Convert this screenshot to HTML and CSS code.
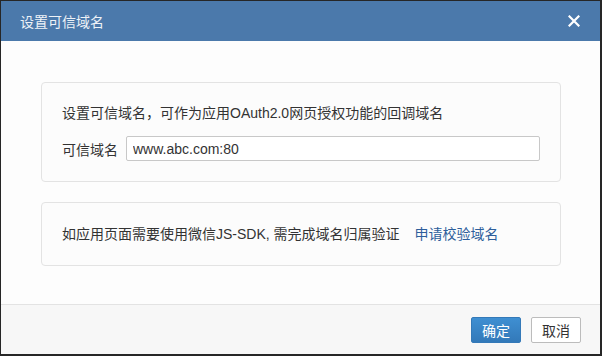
FILE: index.html
```html
<!DOCTYPE html>
<html lang="zh-CN">

<head>
    <meta charset="UTF-8" />
    <title>设置可信域名</title>
    <link rel="stylesheet" href="styles.css">
</head>

<body>
    <div class="dialog">
        <div class="dialog-header">
            <h3 class="dialog-title">设置可信域名</h3>
            <button class="dialog-close" type="button" aria-label="关闭">
                <svg width="12" height="12" viewBox="0 0 12 12">
                    <path d="M1.5 1.5 L10.5 10.5 M10.5 1.5 L1.5 10.5" stroke="#ffffff" stroke-width="2.2" stroke-linecap="square" />
                </svg>
            </button>
        </div>

        <div class="dialog-body">
            <div class="panel">
                <p class="panel-text">设置可信域名，可作为应用OAuth2.0网页授权功能的回调域名</p>
                <div class="field">
                    <label class="field-label" for="domain">可信域名</label>
                    <input class="field-input" type="text" id="domain" value="www.abc.com:80" />
                </div>
            </div>

            <div class="panel panel-tip">
                <p class="panel-text">如应用页面需要使用微信JS-SDK, 需完成域名归属验证<a class="link" href="#">申请校验域名</a></p>
            </div>
        </div>

        <div class="dialog-footer">
            <button class="btn btn-primary" type="button">确定</button>
            <button class="btn" type="button">取消</button>
        </div>
    </div>
</body>

</html>
```

FILE: styles.css
```css
* {
    box-sizing: border-box;
    margin: 0;
    padding: 0;
}

html,
body {
    height: 100%;
}

body {
    font-family: "Liberation Sans", "Noto Sans CJK SC", sans-serif;
    font-size: 14px;
    color: #333333;
    background-color: #ffffff;
}

.dialog {
    height: 356px;
    display: flex;
    flex-direction: column;
    border-style: solid;
    border-color: #262626;
    border-width: 1px 2px 2px 1px;
    background-color: #fdfdfd;
}

.dialog-header {
    height: 40px;
    display: flex;
    align-items: center;
    justify-content: space-between;
    padding: 0 20px 0 19px;
    background-color: #4b79ab;
}

.dialog-title {
    font-size: 14px;
    font-weight: normal;
    color: #eef2f7;
}

.dialog-close {
    width: 12px;
    height: 12px;
    border: none;
    background: none;
    cursor: pointer;
    display: flex;
}

.dialog-body {
    flex: 1;
    padding: 41px 39px 0 40px;
}

.panel {
    border: 1px solid #e3e3e3;
    border-radius: 4px;
    background-color: #fcfcfc;
    padding: 20px 20px 20px 20px;
}

.panel-tip {
    margin-top: 20px;
    padding: 21px 20px;
}

.panel-text {
    line-height: 20px;
}

.field {
    display: flex;
    align-items: center;
    margin-top: 13px;
}

.field-label {
    width: 64px;
}

.field-input {
    width: 414px;
    height: 25px;
    padding: 0 6px;
    font-family: inherit;
    font-size: 14px;
    color: #333333;
    border: 1px solid #c8c8c8;
    border-radius: 2px;
    background-color: #ffffff;
}

.link {
    margin-left: 15px;
    color: #2d5e9b;
    text-decoration: none;
}

.dialog-footer {
    height: 50px;
    display: flex;
    justify-content: flex-end;
    align-items: flex-start;
    gap: 10px;
    padding: 12px 19px 0 0;
    border-top: 1px solid #e3e3e3;
    background-color: #f7f7f7;
}

.btn {
    width: 50px;
    height: 26px;
    font-family: inherit;
    font-size: 14px;
    color: #333333;
    border: 1px solid #bcbcbc;
    border-radius: 2px;
    background-color: #ffffff;
    cursor: pointer;
}

.btn-primary {
    color: #ffffff;
    border-color: #3479b8;
    background: linear-gradient(#3f8fd2, #3379b9);
}
```
